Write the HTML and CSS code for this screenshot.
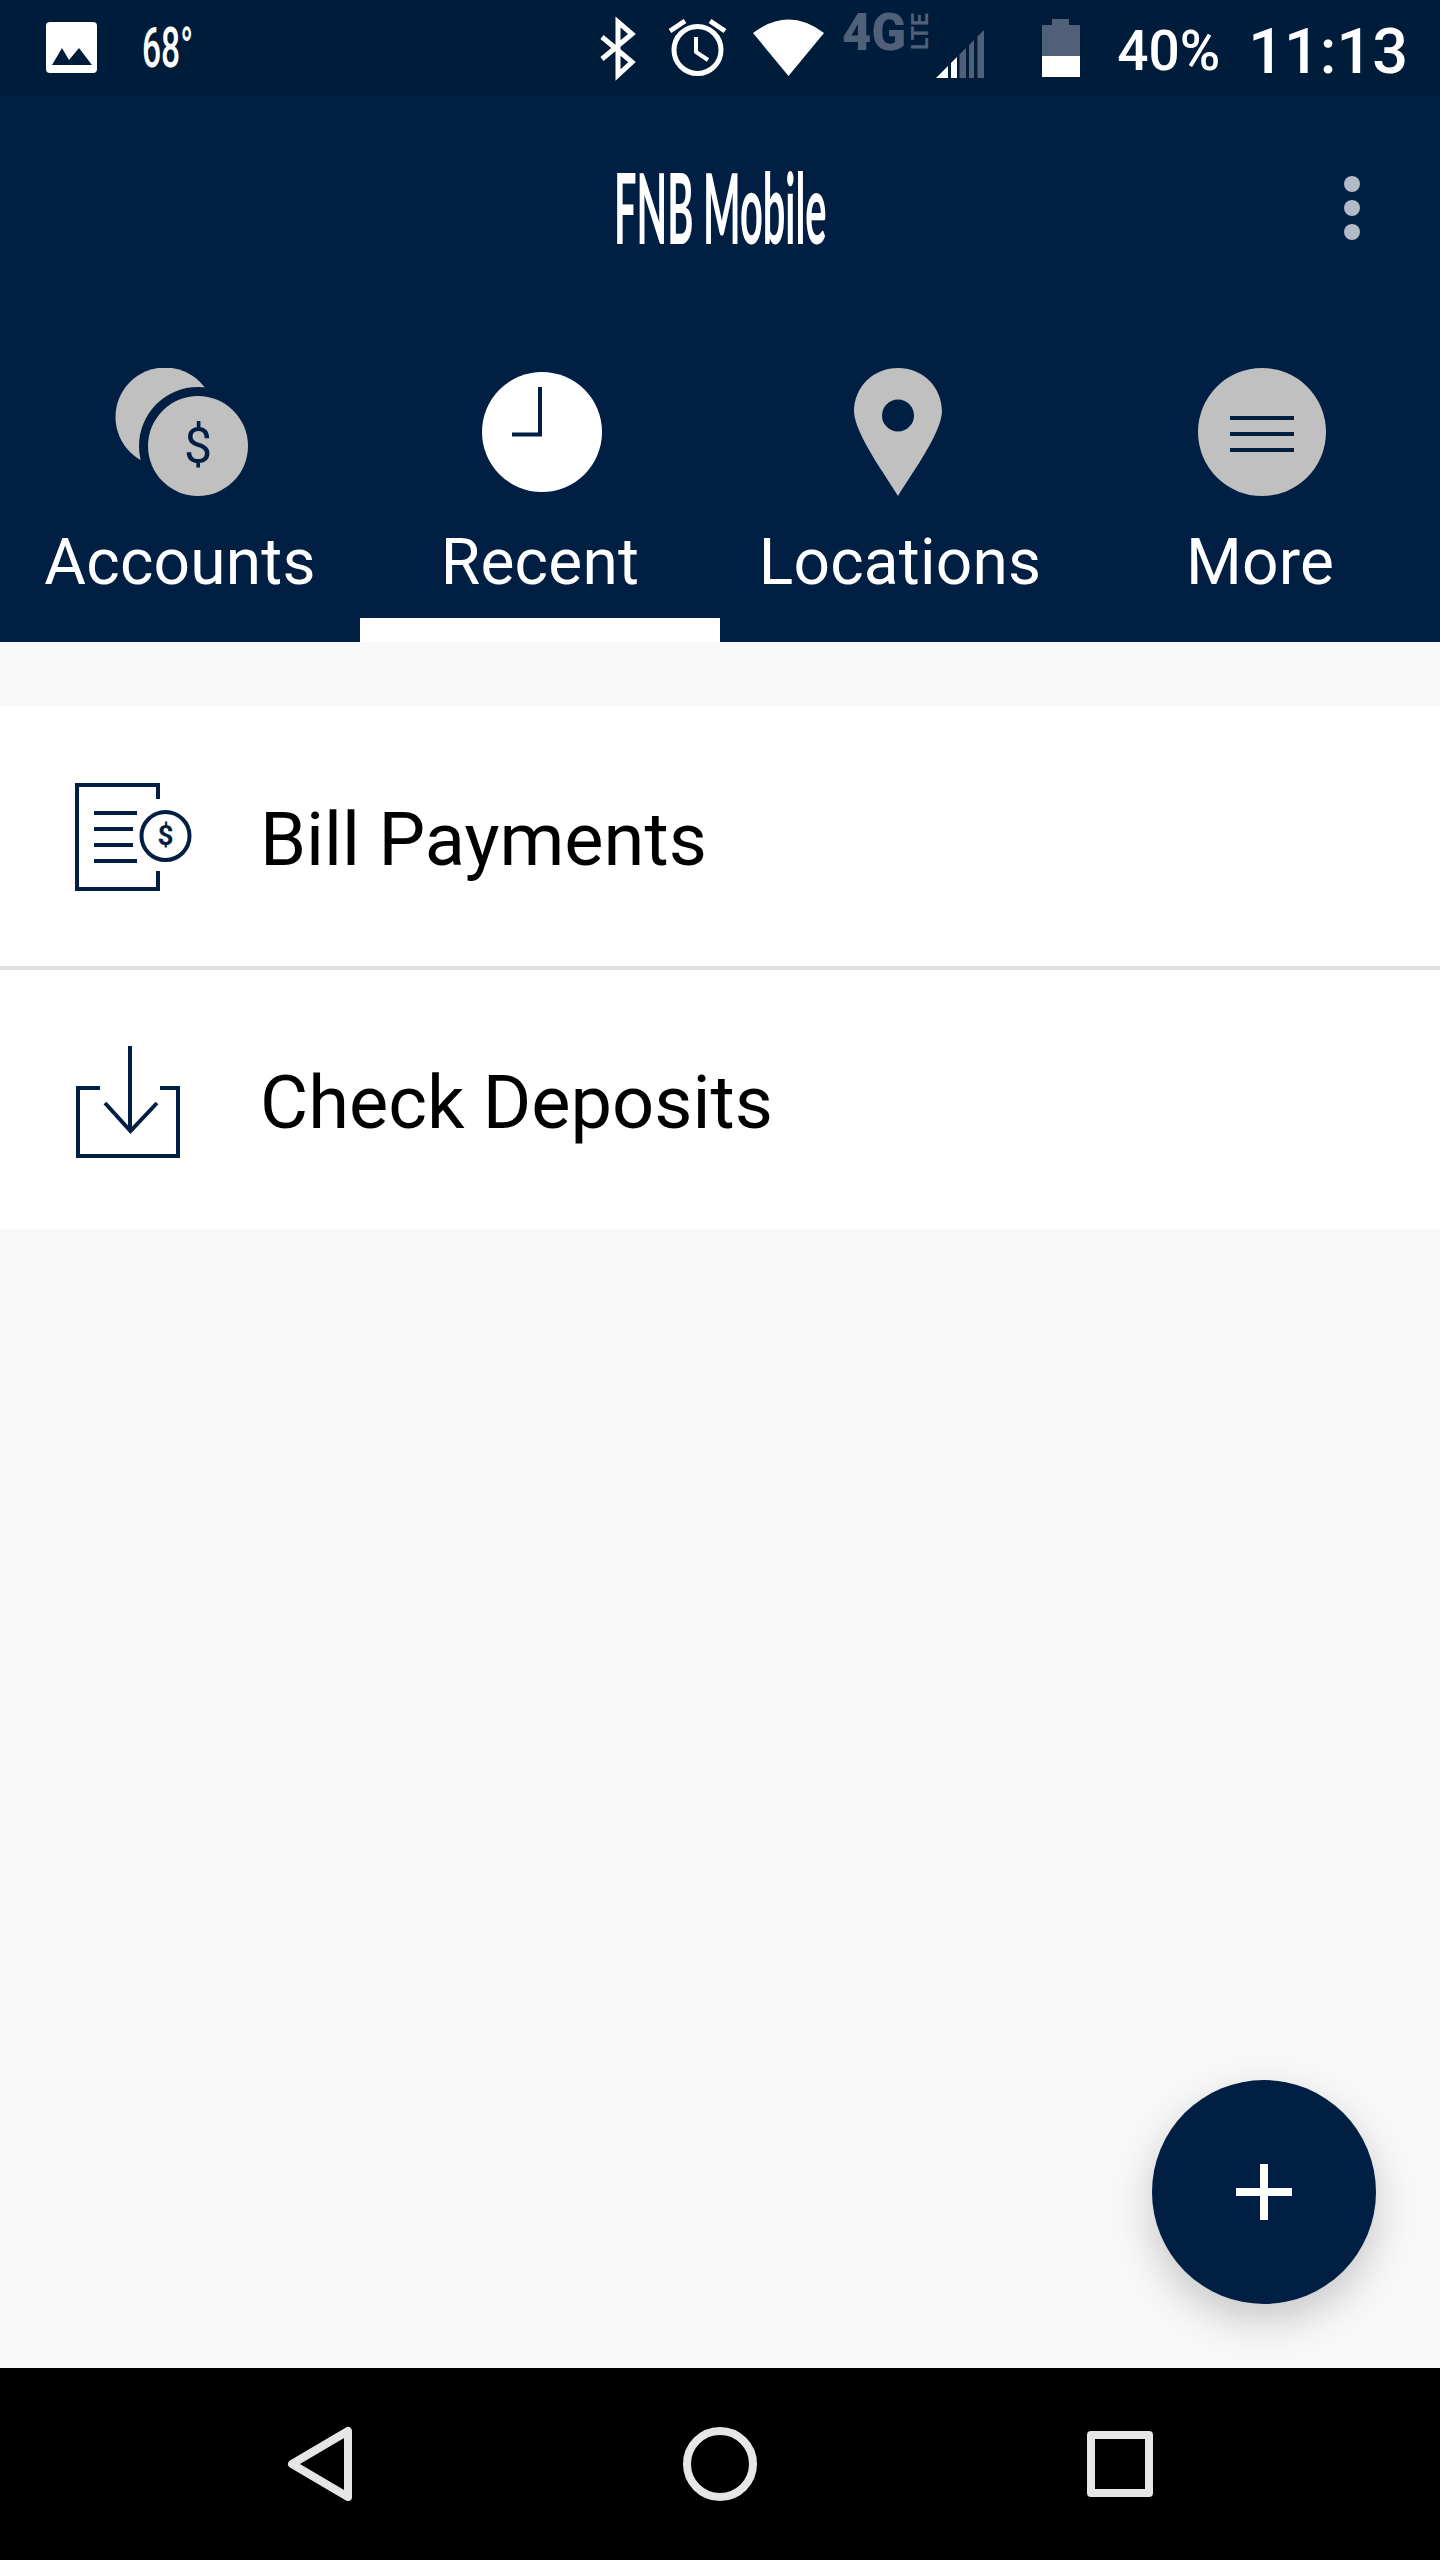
FILE: index.html
```html
<!DOCTYPE html>
<html>
<head>
    <meta charset="UTF-8" />
    <title>FNB Mobile</title>
    <link rel="stylesheet" href="styles.css">
</head>
<body>
    <div id="phone">
        <div class="status-bar">
            <svg class="status-icon icon-picture" viewBox="0 0 51 96">
                <rect y="22" width="51" height="51" rx="4" fill="#fff"/>
                <path d="M6 65 L16 48 L23 60 L33 48 L46 65 Z" fill="#001c3b"/>
            </svg>
            <span class="temp">68°</span>
            <svg class="status-icon icon-bluetooth" viewBox="0 0 38 96">
                <path d="M3 37 L33 62 L19 75 L19 22 L33 34 L3 59" fill="none" stroke="#fff" stroke-width="5"/>
            </svg>
            <svg class="status-icon icon-alarm" viewBox="0 0 61 96">
                <circle cx="30.5" cy="50" r="23.5" fill="none" stroke="#fff" stroke-width="5"/>
                <path d="M29 37 V52 L41 60" fill="none" stroke="#fff" stroke-width="4"/>
                <path d="M3 31 L18 21 M58 31 L43 21" fill="none" stroke="#fff" stroke-width="5"/>
            </svg>
            <svg class="status-icon icon-wifi" viewBox="0 0 75 96">
                <path d="M37.5 76 L2 33 Q37.5 6 73 33 Z" fill="#fff"/>
            </svg>
            <svg class="status-icon icon-network" viewBox="0 0 145 96">
                <text class="net-4g" x="1" y="50" textLength="64" lengthAdjust="spacingAndGlyphs">4G</text>
                <text class="net-lte" transform="translate(87 50) rotate(-90)" textLength="37" lengthAdjust="spacingAndGlyphs">LTE</text>
                <polygon points="95,78 107,78 107,66" fill="#fff"/>
                <polygon points="110,78 116,78 116,57 110,63" fill="#fff"/>
                <polygon points="118.500,78 125,78 125,48 118.500,54.500" fill="#4f6078"/>
                <polygon points="128,78 133,78 133,40 128,45" fill="#4f6078"/>
                <polygon points="136.500,78 143,78 143,30 136.500,36.500" fill="#4f6078"/>
            </svg>
            <svg class="status-icon icon-battery" viewBox="0 0 38 96">
                <path d="M10 19 H27 V25 H38 V56 H0 V25 H10 Z" fill="#4f6078"/>
                <rect y="56" width="38" height="21" fill="#fff"/>
            </svg>
            <span class="battery-text">40%</span>
            <span class="clock">11:13</span>
        </div>

        <div class="toolbar">
            <div class="title">FNB Mobile</div>
            <div class="kebab"><span></span><span></span><span></span></div>
        </div>

        <div class="tabs">
            <div class="tab">
                <svg class="tab-icon" viewBox="0 0 160 128">
                    <circle cx="65" cy="49" r="49.500" fill="#c0c0c0"/>
                    <circle cx="98" cy="78" r="59" fill="#001f43"/>
                    <circle cx="98" cy="78" r="50" fill="#c0c0c0"/>
                    <text class="coin-sign" x="98" y="95">$</text>
                </svg>
                <span class="tab-label">Accounts</span>
            </div>
            <div class="tab active">
                <svg class="tab-icon" viewBox="0 0 160 128">
                    <circle cx="82" cy="64" r="60" fill="#fff"/>
                    <path d="M80 19 V66.500 H52" fill="none" stroke="#001f43" stroke-width="4"/>
                </svg>
                <span class="tab-label">Recent</span>
            </div>
            <div class="tab">
                <svg class="tab-icon" viewBox="0 0 160 128">
                    <path d="M78 128 C66 108 35 66 34 44 C34 18 54 0 78 0 C102 0 122 18 122 44 C121 66 90 108 78 128 Z" fill="#c0c0c0"/>
                    <circle cx="78" cy="47.500" r="16" fill="#001f43"/>
                </svg>
                <span class="tab-label">Locations</span>
            </div>
            <div class="tab">
                <svg class="tab-icon" viewBox="0 0 160 128">
                    <circle cx="82" cy="64" r="64" fill="#c0c0c0"/>
                    <path d="M50 50 H114 M50 66 H114 M50 82 H114" fill="none" stroke="#001f43" stroke-width="4"/>
                </svg>
                <span class="tab-label">More</span>
            </div>
        </div>

        <div class="list">
            <div class="row">
                <svg class="row-icon" viewBox="0 0 130 130">
                    <path d="M88 28 V14 H7 V118 H88 V100" fill="none" stroke="#001f43" stroke-width="4"/>
                    <path d="M24 42 H67 M24 58 H63 M24 74 H63 M24 90 H67" fill="none" stroke="#001f43" stroke-width="4"/>
                    <circle cx="95.500" cy="65" r="24" fill="none" stroke="#001f43" stroke-width="4"/>
                    <text class="doc-sign" x="95.500" y="74">$</text>
                </svg>
                <span class="row-text">Bill Payments</span>
            </div>
            <div class="row">
                <svg class="row-icon" viewBox="0 0 130 130">
                    <path d="M30 53 H8 V121 H108 V53 H90" fill="none" stroke="#001f43" stroke-width="4"/>
                    <path d="M60 11 V95 M35 68 L60.500 96 L87 68" fill="none" stroke="#001f43" stroke-width="4"/>
                </svg>
                <span class="row-text">Check Deposits</span>
            </div>
        </div>

        <div class="content"></div>

        <div class="fab"><span class="fab-h"></span><span class="fab-v"></span></div>

        <div class="nav-bar">
            <div class="nav-item">
                <svg class="nav-icon" viewBox="0 0 80 80">
                    <path d="M68 7 V73 L12 40 Z" fill="none" stroke="#e6e6e6" stroke-width="8" stroke-linejoin="round"/>
                </svg>
            </div>
            <div class="nav-item">
                <svg class="nav-icon" viewBox="0 0 80 80">
                    <circle cx="40" cy="40" r="33" fill="none" stroke="#e6e6e6" stroke-width="8"/>
                </svg>
            </div>
            <div class="nav-item">
                <span class="nav-square"></span>
            </div>
        </div>
    </div>
</body>
</html>
```

FILE: styles.css
```css
* {
    margin: 0;
    padding: 0;
    box-sizing: border-box;
}
body {
    background-color: #f8f8f8;
    font-family: Roboto, "Liberation Sans", sans-serif;
}
#phone {
    width: 1440px;
    height: 2560px;
    display: flex;
    flex-direction: column;
    position: relative;
    overflow: hidden;
}

/* status bar */
.status-bar {
    height: 96px;
    background-color: #001c3b;
    display: flex;
    align-items: center;
    color: #fff;
    padding: 0 32px 0 46px;
}
.status-icon {
    height: 96px;
    flex: none;
}
.icon-picture { width: 51px; }
.icon-bluetooth { width: 38px; margin-left: auto; }
.icon-alarm { width: 61px; margin-left: 30px; }
.icon-wifi { width: 75px; margin-left: 23px; }
.icon-network { width: 145px; margin-left: 15px; }
.icon-battery { width: 38px; margin-left: 56px; }
.temp {
    font-size: 56px;
    font-weight: 500;
    margin-left: 45px;
    display: inline-block;
    width: 51px;
    white-space: nowrap;
    transform: scaleX(.6);
    transform-origin: left center;
}
.battery-text {
    font-size: 55px;
    font-weight: 500;
    margin: 6px 0 0 37px;
}
.clock {
    font-size: 63px;
    font-weight: 500;
    margin: 6px 0 0 28px;
}
.net-4g {
    font: 900 52px Roboto, sans-serif;
    fill: #4f6078;
}
.net-lte {
    font: 700 24px Roboto, sans-serif;
    fill: #4f6078;
}

/* toolbar */
.toolbar {
    height: 224px;
    background-color: #001f43;
    display: grid;
    grid-template-columns: 1fr auto 1fr;
    align-items: center;
}
.title {
    grid-column: 2;
    font-family: Lato, sans-serif;
    font-size: 97px;
    font-weight: 700;
    color: #fff;
    margin-top: -4px;
    transform: scaleX(.41);
    white-space: nowrap;
}
.kebab {
    grid-column: 3;
    justify-self: end;
    margin-right: 80px;
    display: flex;
    flex-direction: column;
    gap: 8px;
}
.kebab span {
    width: 16px;
    height: 16px;
    border-radius: 50%;
    background-color: #b2bac6;
}

/* tabs */
.tabs {
    display: grid;
    grid-template-columns: repeat(4, 360px);
    background-color: #001f43;
    padding-top: 48px;
}
.tab {
    display: flex;
    flex-direction: column;
    align-items: center;
    border-bottom: 24px solid transparent;
    padding-bottom: 17px;
}
.tab.active {
    border-bottom-color: #fff;
}
.tab-icon {
    width: 160px;
    height: 128px;
}
.tab-label {
    font-size: 64px;
    line-height: 76px;
    letter-spacing: .2px;
    margin-top: 29px;
    color: #fff;
}
.coin-sign {
    font: 400 50px Roboto, sans-serif;
    fill: #001f43;
    text-anchor: middle;
}
.doc-sign {
    font: 700 28px Roboto, sans-serif;
    fill: #001f43;
    text-anchor: middle;
}

/* list */
.list {
    margin-top: 64px;
    background-color: #fff;
}
.row {
    height: 260px;
    display: flex;
    align-items: center;
    padding-left: 70px;
}
.row + .row {
    border-top: 4px solid #e0e0e0;
    height: 263px;
}
.row-icon {
    width: 130px;
    height: 130px;
    margin-right: 60px;
}
.row-text {
    font-size: 74px;
    margin-top: 6px;
    color: #000;
}

.content {
    flex: 1;
}

/* floating button */
.fab {
    position: absolute;
    left: 1152px;
    top: 2080px;
    width: 224px;
    height: 224px;
    border-radius: 50%;
    background-color: #001f43;
    box-shadow: 0 16px 40px rgba(0, 0, 0, .2);
}
.fab-h,
.fab-v {
    position: absolute;
    background-color: #fff;
}
.fab-h {
    left: 84px;
    top: 108px;
    width: 56px;
    height: 8px;
}
.fab-v {
    left: 108px;
    top: 84px;
    width: 8px;
    height: 56px;
}

/* android nav */
.nav-bar {
    height: 192px;
    background-color: #000;
    display: grid;
    grid-template-columns: repeat(3, 400px);
    justify-content: center;
}
.nav-item {
    display: flex;
    align-items: center;
    justify-content: center;
}
.nav-icon {
    width: 80px;
    height: 80px;
}
.nav-square {
    width: 66px;
    height: 66px;
    border: 8px solid #e6e6e6;
    border-radius: 4px;
}
```
